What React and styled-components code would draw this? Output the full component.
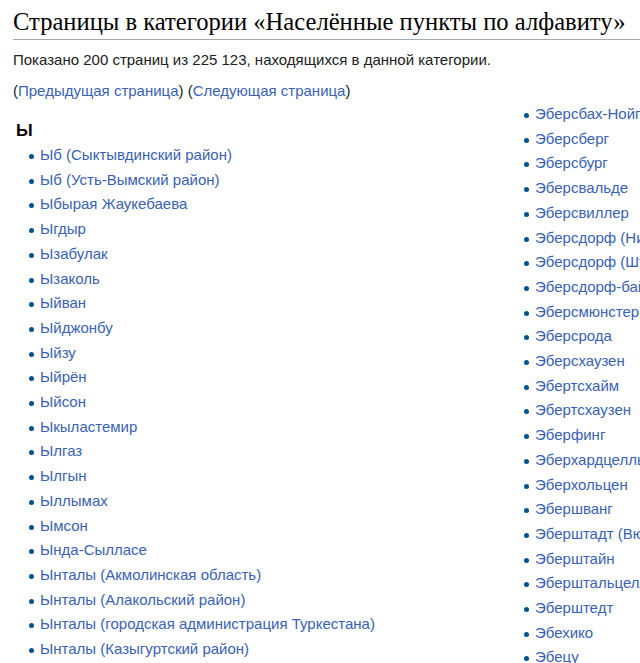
import React from 'react'
import styled, { createGlobalStyle } from 'styled-components'

const Global = createGlobalStyle`
  html, body {
    margin: 0;
    padding: 0;
    background: #fff;
    overflow: hidden;
  }
  body {
    font-family: "Liberation Sans", Arial, sans-serif;
    color: #202122;
  }
`

const Page = styled.div`
  width: 640px;
  height: 663px;
  overflow: hidden;
  padding: 0 0 0 13px;
  box-sizing: border-box;
`

const Title = styled.h1`
  margin: 0;
  padding: 8px 0 3px;
  font-family: "Liberation Serif", "Times New Roman", serif;
  font-weight: normal;
  font-size: 24.6px;
  line-height: 28px;
  color: #000;
  white-space: nowrap;
  border-bottom: 1px solid #a2a9b1;
`

const Info = styled.p`
  margin: 9px 0 0;
  font-size: 15px;
  line-height: 22px;
  color: #202122;
  white-space: nowrap;
`

const Nav = styled.p`
  margin: 9px 0 0;
  font-size: 15px;
  line-height: 22px;
  color: #202122;
  white-space: nowrap;
`

const Link = styled.a`
  color: #3a62b2;
  text-decoration: none;
`

const Columns = styled.div`
  display: flex;
  align-items: flex-start;
`

const Column = styled.div`
  flex: 0 0 ${p => p.$width}px;
  padding-top: ${p => p.$top}px;
  white-space: nowrap;
`

const Letter = styled.h3`
  margin: 0;
  padding-left: 3px;
  font-size: 17px;
  line-height: 24px;
  font-weight: bold;
  color: #000;
`

const List = styled.ul`
  margin: 0;
  padding: 0 0 0 ${p => p.$indent}px;
  list-style: none;
`

const Item = styled.li`
  position: relative;
  font-size: 15px;
  line-height: 24.7px;
  &::before {
    content: '';
    position: absolute;
    left: -11px;
    top: 11px;
    width: 5px;
    height: 5px;
    border-radius: 50%;
    background: #00528c;
  }
`

const leftItems = [
  'Ыб (Сыктывдинский район)',
  'Ыб (Усть-Вымский район)',
  'Ыбырая Жаукебаева',
  'Ыгдыр',
  'Ызабулак',
  'Ызаколь',
  'Ыйван',
  'Ыйджонбу',
  'Ыйзу',
  'Ыйрён',
  'Ыйсон',
  'Ыкыластемир',
  'Ылгаз',
  'Ылгын',
  'Ыллымах',
  'Ымсон',
  'Ында-Сылласе',
  'Ынталы (Акмолинская область)',
  'Ынталы (Алакольский район)',
  'Ынталы (городская администрация Туркестана)',
  'Ынталы (Казыгуртский район)',
]

const rightItems = [
  'Эберсбах-Нойгерсдорф',
  'Эберсберг',
  'Эберсбург',
  'Эберсвальде',
  'Эберсвиллер',
  'Эберсдорф (Нижняя Саксония)',
  'Эберсдорф (Штирия)',
  'Эберсдорф-бай-Кобург',
  'Эберсмюнстер',
  'Эберсрода',
  'Эберсхаузен',
  'Эбертсхайм',
  'Эбертсхаузен',
  'Эберфинг',
  'Эберхардцелль',
  'Эберхольцен',
  'Эбершванг',
  'Эберштадт (Вюртемберг)',
  'Эберштайн',
  'Эберштальцелль',
  'Эберштедт',
  'Эбехико',
  'Эбецу',
]

const App = () => {
  return (
    <>
      <Global />
      <Page>
        <Title>Страницы в категории «Населённые пункты по алфавиту»</Title>
        <Info>Показано 200 страниц из 225 123, находящихся в данной категории.</Info>
        <Nav>
          (<Link href="#">Предыдущая страница</Link>) (<Link href="#">Следующая страница</Link>)
        </Nav>
        <Columns>
          <Column $width={495} $top={17}>
            <Letter>Ы</Letter>
            <List $indent={27}>
              {leftItems.map((item, i) => (
                <Item key={i}><Link href="#">{item}</Link></Item>
              ))}
            </List>
          </Column>
          <Column $width={200} $top={0}>
            <List $indent={27}>
              {rightItems.map((item, i) => (
                <Item key={i}><Link href="#">{item}</Link></Item>
              ))}
            </List>
          </Column>
        </Columns>
      </Page>
    </>
  )
}

export default App
